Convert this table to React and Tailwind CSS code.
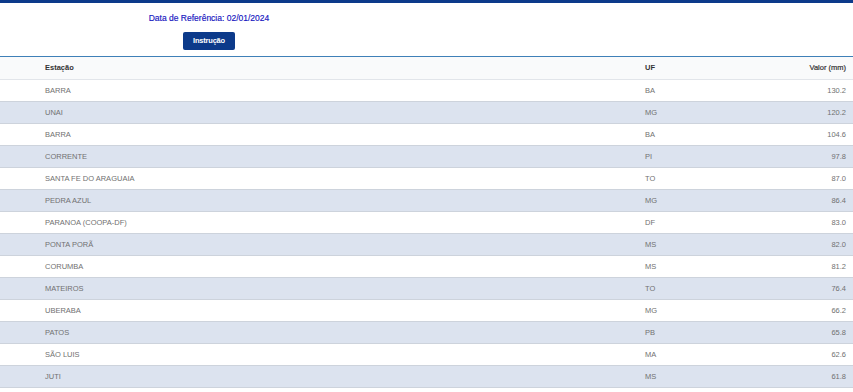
import React from 'react';

const rows = [
    ['BARRA', 'BA', '130.2'],
    ['UNAI', 'MG', '120.2'],
    ['BARRA', 'BA', '104.6'],
    ['CORRENTE', 'PI', '97.8'],
    ['SANTA FE DO ARAGUAIA', 'TO', '87.0'],
    ['PEDRA AZUL', 'MG', '86.4'],
    ['PARANOA (COOPA-DF)', 'DF', '83.0'],
    ['PONTA PORÃ', 'MS', '82.0'],
    ['CORUMBA', 'MS', '81.2'],
    ['MATEIROS', 'TO', '76.4'],
    ['UBERABA', 'MG', '66.2'],
    ['PATOS', 'PB', '65.8'],
    ['SÃO LUIS', 'MA', '62.6'],
    ['JUTI', 'MS', '61.8']
];

const App = () => {
    return (
        <div className="w-[853px] h-[392px] overflow-hidden bg-white font-['Liberation_Sans',Arial,sans-serif]">
            <div className="h-[3px] bg-[#0c3a8a]"></div>
            <div className="h-[53px] w-[418px] flex flex-col items-center pt-[10px]">
                <p className="text-[8.5px] leading-[11px] text-[#1515c0] [-webkit-text-stroke:0.15px_#1515c0]">Data de Referência: 02/01/2024</p>
                <button className="mt-[8px] h-[18px] w-[52px] rounded-[2px] bg-[#0c3a8a] text-white text-[7.5px] font-bold tracking-[-0.2px] leading-none">
                    Instrução
                </button>
            </div>
            <div className="border-t border-[#3f80b8]">
                <div className="flex items-center h-[23px] bg-[#f9fafb] border-b border-[#e2e5ea] text-[7.5px] font-bold text-[#333]">
                    <span className="pl-[45px] flex-1">Estação</span>
                    <span className="w-[118px]">UF</span>
                    <span className="w-[90px] text-right pr-[7px] font-normal [-webkit-text-stroke:0.2px_#333]">Valor (mm)</span>
                </div>
                {rows.map((r, i) => (
                    <div
                        key={i}
                        className={`flex items-center h-[22px] border-b border-[#cdd3dc] text-[7.5px] text-[#717171] ${i % 2 === 1 ? 'bg-[#dce3ef]' : 'bg-white'}`}
                    >
                        <span className="pl-[45px] flex-1">{r[0]}</span>
                        <span className="w-[118px]">{r[1]}</span>
                        <span className="w-[90px] text-right pr-[7px]">{r[2]}</span>
                    </div>
                ))}
            </div>
        </div>
    );
};

export default App;
